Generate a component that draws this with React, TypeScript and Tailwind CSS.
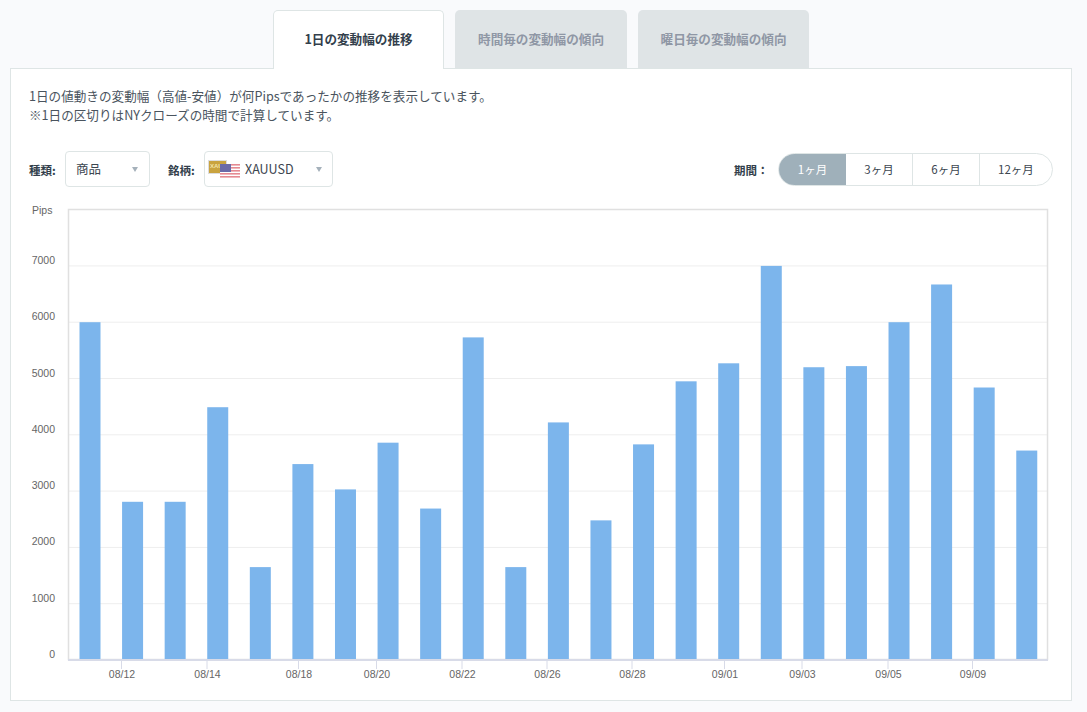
const jp = "font-['Noto_Sans_CJK_JP','Noto_Sans',sans-serif]";

const pips = [6000, 2810, 2810, 4490, 1650, 3480, 3030, 3860, 2690, 5730, 1650, 4220, 2480, 3830, 4950, 5270, 7000, 5200, 5220, 6000, 6670, 4840, 3720];
const gridValues = [0, 1000, 2000, 3000, 4000, 5000, 6000, 7000];
const xTicks = [
  { x: 121.5, label: "08/12" },
  { x: 207, label: "08/14" },
  { x: 298.5, label: "08/18" },
  { x: 376.5, label: "08/20" },
  { x: 462, label: "08/22" },
  { x: 547, label: "08/26" },
  { x: 632, label: "08/28" },
  { x: 724.5, label: "09/01" },
  { x: 802, label: "09/03" },
  { x: 888, label: "09/05" },
  { x: 972.5, label: "09/09" },
];

const BASE_Y = 660;
const PX_PER_PIP = 0.0563;

const Chart = () => (
  <svg viewBox="11 200 1060 500" className="block w-[1060px] h-[500px]" fontFamily="'Liberation Sans', Arial, sans-serif">
    <text x="32" y="214" fontSize="10.5" fill="#666">Pips</text>
    {gridValues.map((v) => {
      const y = BASE_Y - v * PX_PER_PIP;
      return (
        <g key={v}>
          {v > 0 && <line x1="68" x2="1048" y1={y} y2={y} stroke="#eeeeee" />}
          <text x="55" y={y - 2} fontSize="10.5" fill="#666" textAnchor="end">{v}</text>
        </g>
      );
    })}
    <rect x="68.5" y="209.5" width="979" height="450" fill="none" stroke="#e0e0e0" strokeWidth="1.5" />
    {pips.map((v, i) => {
      const h = v * PX_PER_PIP;
      return <rect key={i} x={79.5 + i * 42.58} y={BASE_Y - h} width="21" height={h} fill="#7cb5ec" />;
    })}
    <line x1="68" x2="1048" y1="660" y2="660" stroke="#d8dbe8" strokeWidth="2" />
    {xTicks.map((t) => (
      <g key={t.label}>
        <line x1={t.x} x2={t.x} y1="660" y2="669" stroke="#d8dbe8" />
        <text x={t.x + 0.5} y="678" fontSize="10.5" fill="#666" textAnchor="middle">{t.label}</text>
      </g>
    ))}
  </svg>
);

const XauUsdFlag = () => (
  <svg width="33" height="19" viewBox="0 0 33 19" className="shrink-0">
    <rect x="0.5" y="0.5" width="18" height="13" fill="#c9a33f" stroke="#ddd" />
    <text x="2" y="8" fontSize="6" fontWeight="700" fill="#f3e3a8" fontFamily="'Liberation Sans', sans-serif">XAU</text>
    <rect x="12" y="4" width="20" height="15" fill="#fff" />
    <rect x="12" y="4" width="20" height="1.6" fill="#e58a92" />
    <rect x="12" y="7" width="20" height="1.6" fill="#e58a92" />
    <rect x="12" y="10" width="20" height="1.6" fill="#e58a92" />
    <rect x="12" y="13" width="20" height="1.6" fill="#e58a92" />
    <rect x="12" y="16" width="20" height="1.6" fill="#e58a92" />
    <rect x="12" y="4" width="11" height="8" fill="#6a6aa8" />
  </svg>
);

const Caret = () => <span className="w-0 h-0 border-x-[3.5px] border-x-transparent border-t-[5px] border-t-[#a5b1bb]" />;

const periods = ["1ヶ月", "3ヶ月", "6ヶ月", "12ヶ月"];

export default function App() {
  return (
    <div className={`${jp} w-[1087px] h-[712px] overflow-hidden bg-[#f9fafc] pt-[10px] pl-[10px] text-[#3c4650]`}>
      {/* Tabs */}
      <div className="w-[1062px] flex justify-center gap-[11px] h-[59px] relative z-10">
        <div className="w-[171px] h-[59px] bg-white border border-[#dee5e5] border-b-0 rounded-t-[5px] flex items-center justify-center pb-[1px] text-[12.6px] font-bold text-[#333f4c]">
          1日の変動幅の推移
        </div>
        <div className="w-[172px] h-[58px] bg-[#dfe4e6] rounded-t-[5px] flex items-center justify-center text-[12.6px] font-bold text-[#8f97a5]">
          時間毎の変動幅の傾向
        </div>
        <div className="w-[171px] h-[58px] bg-[#dfe4e6] rounded-t-[5px] flex items-center justify-center text-[12.6px] font-bold text-[#8f97a5]">
          曜日毎の変動幅の傾向
        </div>
      </div>

      {/* Panel */}
      <div className="w-[1062px] h-[633px] -mt-[1px] bg-white border border-[#dee5e5]">
        <div className="pl-[18px] pt-[17px] text-[12.6px] leading-[19px] text-[#4a545e]">
          <p>1日の値動きの変動幅（高値-安値）が何Pipsであったかの推移を表示しています。</p>
          <p>※1日の区切りはNYクローズの時間で計算しています。</p>
        </div>

        <div className="flex items-center justify-between h-[36px] mt-[27px] pl-[18px] pr-[18px]">
          <div className="flex items-center">
            <span className="text-[11.5px] font-bold text-[#333f4c] w-[36px] pt-[3px]">種類:</span>
            <div className="w-[85px] h-[36px] border border-[#dee5e5] rounded-[4px] flex items-center justify-between pl-[10px] pr-[11px] text-[12.5px]">
              <span className="pt-[1px]">商品</span>
              <Caret />
            </div>
            <span className="text-[11.5px] font-bold text-[#333f4c] ml-[18px] w-[36px] pt-[3px]">銘柄:</span>
            <div className="w-[129px] h-[36px] border border-[#dee5e5] rounded-[4px] flex items-center pl-[3px] pr-[10px] text-[12.5px]">
              <XauUsdFlag />
              <span className="ml-[4px] flex-1 pt-[1px]">XAUUSD</span>
              <Caret />
            </div>
          </div>
          <div className="flex items-center">
            <span className="text-[11.5px] font-bold text-[#333f4c] w-[44px] pt-[3px]">期間：</span>
            <div className="flex w-[275px] h-[33px] border border-[#dee5e5] rounded-full overflow-hidden text-[11.5px]">
              {periods.map((p, i) => (
                <div
                  key={p}
                  className={
                    i === 0
                      ? "w-[67px] bg-[#9fb0ba] text-white flex items-center justify-center pt-[1px]"
                      : i === 3
                        ? "flex-1 flex items-center justify-center pt-[1px]"
                        : "w-[67px] border-r border-[#dee5e5] flex items-center justify-center pt-[1px]"
                  }
                >
                  {p}
                </div>
              ))}
            </div>
          </div>
        </div>

        <div className="mt-[13px]">
          <Chart />
        </div>
      </div>
    </div>
  );
}
